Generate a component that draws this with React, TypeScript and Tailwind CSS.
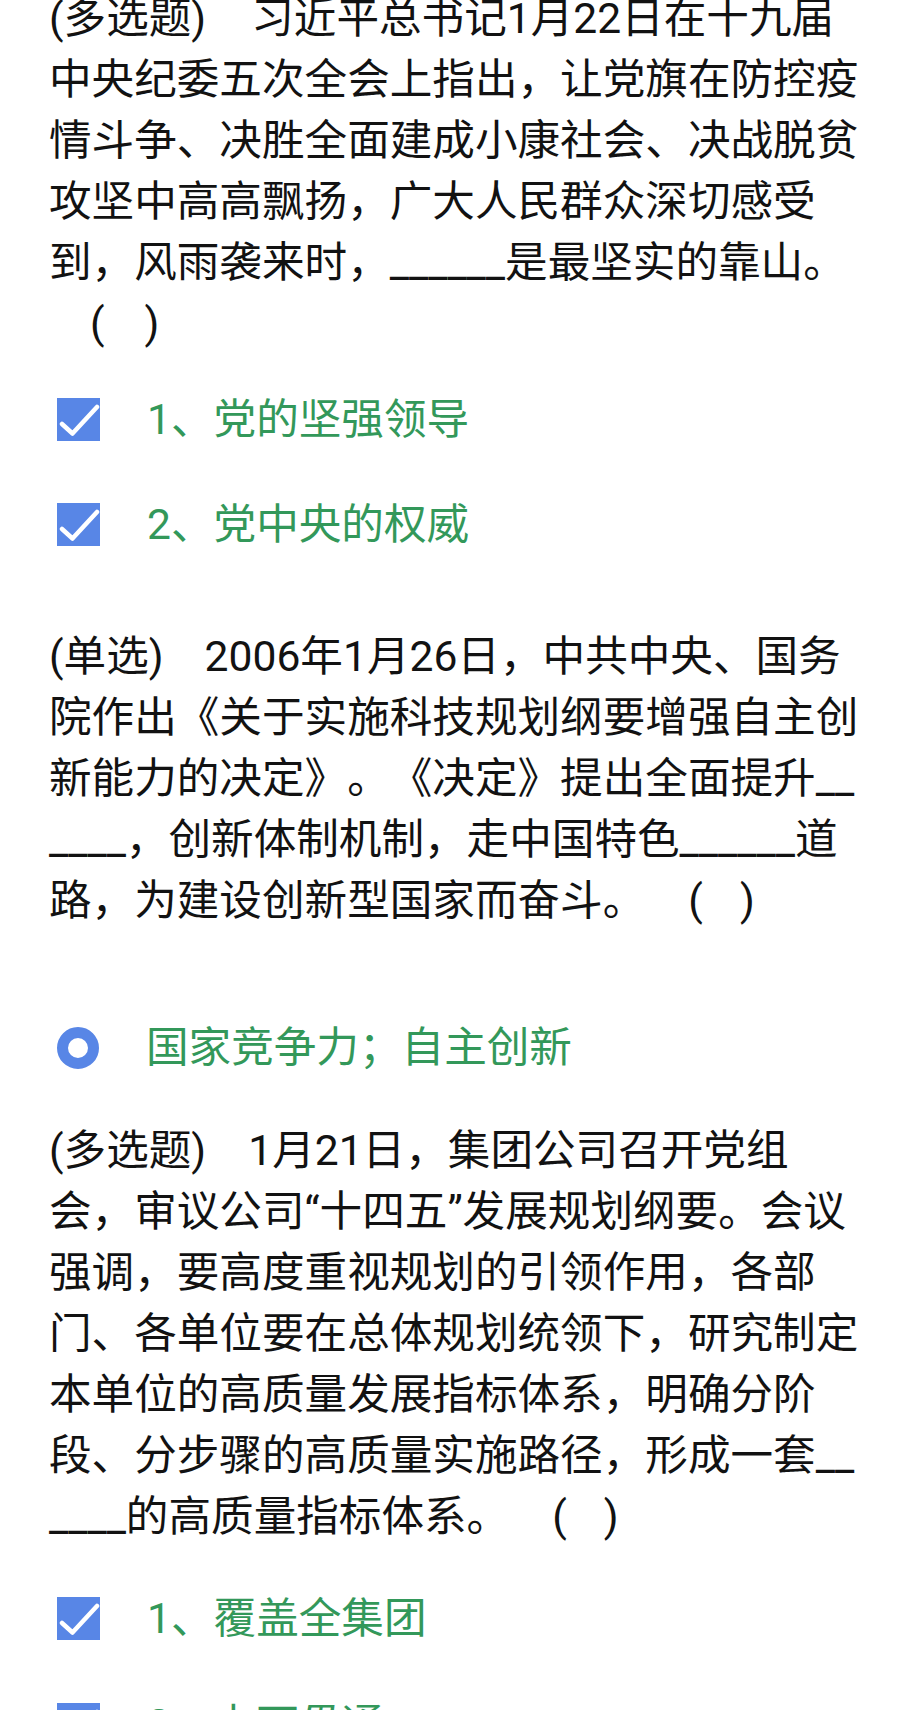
import React from "react";

const CheckBox = () => (
  <span className="inline-flex w-[43px] h-[43px] shrink-0 bg-[#5886e6] ml-[8px]">
    <svg viewBox="0 0 43 43" width="43" height="43">
      <path d="M5 26 L15.5 35.5 L40 9" fill="none" stroke="#ffffff" strokeWidth="4.5" strokeLinecap="round" strokeLinejoin="round" />
    </svg>
  </span>
);

const Radio = () => (
  <span className="inline-block w-[42px] h-[42px] shrink-0 rounded-full border-[11px] border-[#5886e6] bg-white ml-[8px]" />
);

const Option = ({ kind, text }: { kind: "check" | "radio"; text: string }) => (
  <div className="flex items-center h-[61px] whitespace-nowrap">
    {kind === "check" ? <CheckBox /> : <Radio />}
    <span className="ml-[47px] text-[#33985a]">{text}</span>
  </div>
);

const Line = ({ children }: { children: React.ReactNode }) => (
  <div className="whitespace-nowrap h-[61px]">{children}</div>
);

export default function App() {
  return (
    <div className="w-[906px] h-[1710px] overflow-hidden bg-white text-[#121212] text-[42.6px] leading-[61px] [text-spacing-trim:space-all] font-['Roboto','Noto_Sans_CJK_SC',sans-serif]">
      <div className="pl-[49px] -mt-[12px]">
        {/* Question 1 */}
        <div>
          <Line>
            (多选题)<span className="inline-block w-[45px]" />习近平总书记1月22日在十九届
          </Line>
          <Line>中央纪委五次全会上指出，让党旗在防控疫</Line>
          <Line>情斗争、决胜全面建成小康社会、决战脱贫</Line>
          <Line>攻坚中高高飘扬，广大人民群众深切感受</Line>
          <Line>到，风雨袭来时，______是最坚实的靠山。</Line>
          <Line>
            <span className="ml-[41px]">(</span>
            <span className="ml-[40px]">)</span>
          </Line>
        </div>
        <div className="mt-[35px] flex flex-col gap-[44px]">
          <Option kind="check" text="1、党的坚强领导" />
          <Option kind="check" text="2、党中央的权威" />
        </div>

        {/* Question 2 */}
        <div className="mt-[71px]">
          <Line>
            (单选)<span className="inline-block w-[41px]" />2006年1月26日，中共中央、国务
          </Line>
          <Line>院作出《关于实施科技规划纲要增强自主创</Line>
          <Line>新能力的决定》。《决定》提出全面提升__</Line>
          <Line>____，创新体制机制，走中国特色______道</Line>
          <Line>
            路，为建设创新型国家而奋斗。
            <span className="ml-[43px]">(</span>
            <span className="ml-[37px]">)</span>
          </Line>
        </div>
        <div className="mt-[86px]">
          <Option kind="radio" text="国家竞争力；自主创新" />
        </div>

        {/* Question 3 */}
        <div className="mt-[42px]">
          <Line>
            (多选题)<span className="inline-block w-[42px]" />1月21日，集团公司召开党组
          </Line>
          <Line>会，审议公司“十四五”发展规划纲要。会议</Line>
          <Line>强调，要高度重视规划的引领作用，各部</Line>
          <Line>门、各单位要在总体规划统领下，研究制定</Line>
          <Line>本单位的高质量发展指标体系，明确分阶</Line>
          <Line>段、分步骤的高质量实施路径，形成一套__</Line>
          <Line>
            ____的高质量指标体系。
            <span className="ml-[43px]">(</span>
            <span className="ml-[37px]">)</span>
          </Line>
        </div>
        <div className="mt-[41px] flex flex-col gap-[45px]">
          <Option kind="check" text="1、覆盖全集团" />
          <Option kind="check" text="2、上下贯通" />
        </div>
      </div>
    </div>
  );
}
